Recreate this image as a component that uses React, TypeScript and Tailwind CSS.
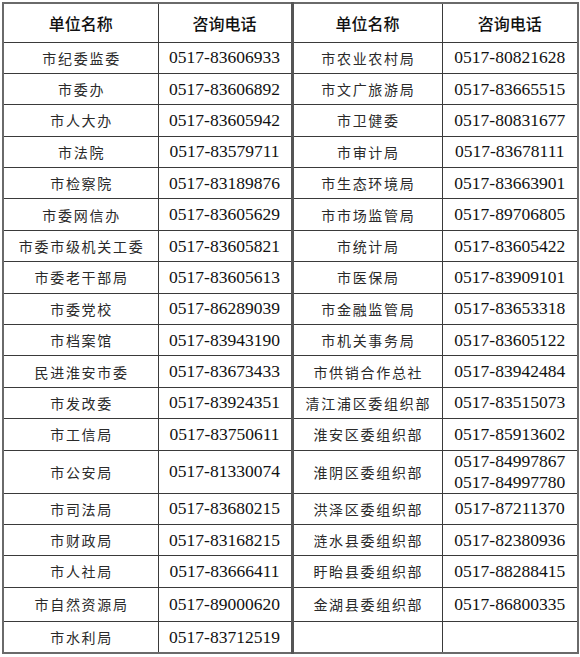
import React from "react";

type Row = { a: string; ap: string; b: string; bp: string[]; h: string };

const rows: Row[] = [
  { a: "市纪委监委", ap: "0517-83606933", b: "市农业农村局", bp: ["0517-80821628"], h: "h-[31.4px]" },
  { a: "市委办", ap: "0517-83606892", b: "市文广旅游局", bp: ["0517-83665515"], h: "h-[31.4px]" },
  { a: "市人大办", ap: "0517-83605942", b: "市卫健委", bp: ["0517-80831677"], h: "h-[31.4px]" },
  { a: "市法院", ap: "0517-83579711", b: "市审计局", bp: ["0517-83678111"], h: "h-[31.4px]" },
  { a: "市检察院", ap: "0517-83189876", b: "市生态环境局", bp: ["0517-83663901"], h: "h-[31.4px]" },
  { a: "市委网信办", ap: "0517-83605629", b: "市市场监管局", bp: ["0517-89706805"], h: "h-[31.4px]" },
  { a: "市委市级机关工委", ap: "0517-83605821", b: "市统计局", bp: ["0517-83605422"], h: "h-[31.4px]" },
  { a: "市委老干部局", ap: "0517-83605613", b: "市医保局", bp: ["0517-83909101"], h: "h-[31.4px]" },
  { a: "市委党校", ap: "0517-86289039", b: "市金融监管局", bp: ["0517-83653318"], h: "h-[31.4px]" },
  { a: "市档案馆", ap: "0517-83943190", b: "市机关事务局", bp: ["0517-83605122"], h: "h-[31.4px]" },
  { a: "民进淮安市委", ap: "0517-83673433", b: "市供销合作总社", bp: ["0517-83942484"], h: "h-[31.4px]" },
  { a: "市发改委", ap: "0517-83924351", b: "清江浦区委组织部", bp: ["0517-83515073"], h: "h-[31.4px]" },
  { a: "市工信局", ap: "0517-83750611", b: "淮安区委组织部", bp: ["0517-85913602"], h: "h-[31.4px]" },
  { a: "市公安局", ap: "0517-81330074", b: "淮阴区委组织部", bp: ["0517-84997867", "0517-84997780"], h: "h-[42.6px]" },
  { a: "市司法局", ap: "0517-83680215", b: "洪泽区委组织部", bp: ["0517-87211370"], h: "h-[31.4px]" },
  { a: "市财政局", ap: "0517-83168215", b: "涟水县委组织部", bp: ["0517-82380936"], h: "h-[31.3px]" },
  { a: "市人社局", ap: "0517-83666411", b: "盱眙县委组织部", bp: ["0517-88288415"], h: "h-[31.3px]" },
  { a: "市自然资源局", ap: "0517-89000620", b: "金湖县委组织部", bp: ["0517-86800335"], h: "h-[34.4px]" },
  { a: "市水利局", ap: "0517-83712519", b: "", bp: [], h: "h-[31.6px]" },
];

const cn = "font-['Noto_Sans_CJK_SC','Noto_Sans',sans-serif]";
const num = "font-['Liberation_Serif','Noto_Sans_CJK_SC',serif]";

const cell = "border border-[#3a3a3a] p-0 text-center align-middle";
const nameCls = `${cell} ${cn} text-[14px] tracking-[1.7px] pl-[1.7px] text-[#2a2a2a] leading-none`;
const numCls = `${cell} ${num} text-[17.5px] text-[#111] leading-[21px]`;
const headCls = `${cell} ${cn} text-[16px] font-medium text-[#111] leading-none`;

export default function App() {
  return (
    <div className="w-[580px] h-[657px] bg-white pl-[2px] pt-[2px]">
      <table className="table-fixed border-collapse w-[575px] border-2 border-[#6a6a6a]">
        <colgroup>
          <col className="w-[155px]" />
          <col className="w-[134px]" />
          <col className="w-[150px]" />
          <col className="w-[136px]" />
        </colgroup>
        <tbody>
          <tr className="h-[39px]">
            <td className={headCls}>单位名称</td>
            <td className={headCls}>咨询电话</td>
            <td className={`${headCls} border-l-[3px] border-l-[#555]`}>单位名称</td>
            <td className={headCls}>咨询电话</td>
          </tr>
          {rows.map((r, i) => (
            <tr key={i} className={r.h}>
              <td className={nameCls}>{r.a}</td>
              <td className={numCls}>{r.ap}</td>
              <td className={`${nameCls} border-l-[3px] border-l-[#555]`}>{r.b}</td>
              <td className={numCls}>
                {r.bp.map((p) => (
                  <div key={p}>{p}</div>
                ))}
              </td>
            </tr>
          ))}
        </tbody>
      </table>
    </div>
  );
}
